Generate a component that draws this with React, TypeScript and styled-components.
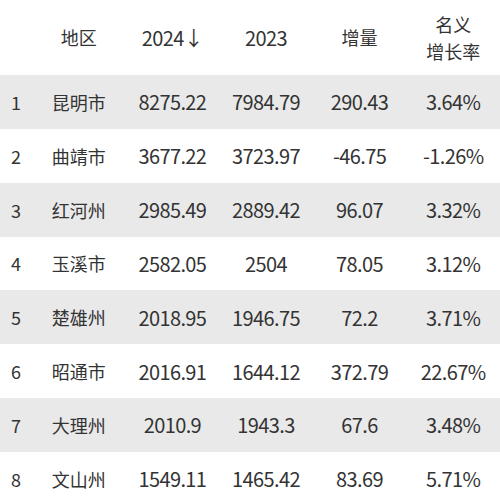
import React from 'react';
import styled, { createGlobalStyle } from 'styled-components';

type Row = {
  region: string;
  y2024: string;
  y2023: string;
  delta: string;
  rate: string;
};

const ROWS: Row[] = [
  { region: '昆明市', y2024: '8275.22', y2023: '7984.79', delta: '290.43', rate: '3.64%' },
  { region: '曲靖市', y2024: '3677.22', y2023: '3723.97', delta: '-46.75', rate: '-1.26%' },
  { region: '红河州', y2024: '2985.49', y2023: '2889.42', delta: '96.07', rate: '3.32%' },
  { region: '玉溪市', y2024: '2582.05', y2023: '2504', delta: '78.05', rate: '3.12%' },
  { region: '楚雄州', y2024: '2018.95', y2023: '1946.75', delta: '72.2', rate: '3.71%' },
  { region: '昭通市', y2024: '2016.91', y2023: '1644.12', delta: '372.79', rate: '22.67%' },
  { region: '大理州', y2024: '2010.9', y2023: '1943.3', delta: '67.6', rate: '3.48%' },
  { region: '文山州', y2024: '1549.11', y2023: '1465.42', delta: '83.69', rate: '5.71%' },
];

const GlobalStyle = createGlobalStyle`
  html, body {
    margin: 0;
    padding: 0;
    background: #ffffff;
  }
  body {
    font-family: "Noto Sans CJK SC", "Noto Sans", sans-serif;
    color: #333333;
  }
`;

const App = () => {
  return (
    <>
      <GlobalStyle />
      <StyledTable>
        <StyledHeader>
          <StyledCell />
          <StyledCell>地区</StyledCell>
          <StyledNumber>2024↓</StyledNumber>
          <StyledNumber>2023</StyledNumber>
          <StyledCell>增量</StyledCell>
          <StyledCell>
            名义
            <br />
            增长率
          </StyledCell>
        </StyledHeader>
        {ROWS.map((row, i) => (
          <StyledRow key={row.region} $striped={i % 2 === 0}>
            <StyledCell>{i + 1}</StyledCell>
            <StyledCell>{row.region}</StyledCell>
            <StyledNumber>{row.y2024}</StyledNumber>
            <StyledNumber>{row.y2023}</StyledNumber>
            <StyledNumber>{row.delta}</StyledNumber>
            <StyledNumber>{row.rate}</StyledNumber>
          </StyledRow>
        ))}
      </StyledTable>
    </>
  );
};

const StyledTable = styled.div`
  width: 500px;
  height: 502px;
  overflow: hidden;
  display: flex;
  flex-direction: column;
`;
const StyledHeader = styled.div`
  display: grid;
  grid-template-columns: 32px repeat(5, 1fr);
  align-items: center;
  height: 75px;
  flex-shrink: 0;
  font-size: 18px;
  line-height: 27px;
`;
const StyledRow = styled.div<{ $striped: boolean }>`
  display: grid;
  grid-template-columns: 32px repeat(5, 1fr);
  align-items: center;
  height: 53.85px;
  flex-shrink: 0;
  background: ${({ $striped }) => ($striped ? '#e9e9e9' : '#ffffff')};
  font-size: 18px;
`;
const StyledCell = styled.div`
  text-align: center;
`;
const StyledNumber = styled(StyledCell)`
  font-size: 20px;
  letter-spacing: -0.6px;
`;

export default App;
